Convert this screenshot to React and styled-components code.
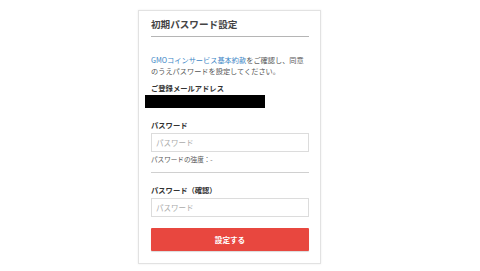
import React from "react";
import styled, { createGlobalStyle } from "styled-components";

const Global = createGlobalStyle`
  html, body { margin: 0; padding: 0; background: #fff; }
  body { font-family: "Noto Sans CJK JP", "Noto Sans", sans-serif; }
`;

const Page = styled.div`
  width: 480px;
  height: 271px;
  display: flex;
  justify-content: flex-start;
  padding: 10px 0 0 138px;
  box-sizing: border-box;
`;

const Card = styled.div`
  width: 183px;
  height: 254px;
  box-sizing: border-box;
  border: 1px solid #e2e2e2;
  box-shadow: 0 0 2px rgba(0,0,0,0.08);
  padding: 6px 11px 0 12px;
  display: flex;
  flex-direction: column;
`;

const Title = styled.div`
  font-size: 9.6px;
  font-weight: 700;
  color: #444;
  line-height: 14px;
  padding-bottom: 5px;
  border-bottom: 1px solid #b5b5b5;
`;

const Intro = styled.p`
  margin: 18px 0 0;
  font-size: 7.2px;
  line-height: 10.5px;
  color: #555;
`;

const Link = styled.span`
  color: #3d86c6;
`;

const Label = styled.div`
  font-size: 7.3px;
  font-weight: 700;
  color: #333;
  line-height: 10px;
  margin-top: ${(p) => p.$top}px;
`;

const Masked = styled.div`
  width: 120px;
  height: 13px;
  background: #000;
  margin: 2px 0 0 -6px;
`;

const Input = styled.input`
  display: block;
  box-sizing: border-box;
  width: 158px;
  height: 19px;
  margin-top: 3px;
  border: 1px solid #dcdcdc;
  padding: 0 4px;
  font-family: inherit;
  font-size: 7.5px;
  color: #333;
  outline: none;
  &::placeholder { color: #aaa; }
`;

const Hint = styled.div`
  font-size: 6.6px;
  color: #555;
  line-height: 10px;
  margin-top: 2px;
  padding-bottom: 8px;
  border-bottom: 1px solid #d0d0d0;
`;

const Button = styled.button`
  margin-top: 11px;
  width: 158px;
  height: 23px;
  border: none;
  border-radius: 1px;
  background: #e8473f;
  color: #fff;
  font-family: inherit;
  font-weight: 700;
  font-size: 7.6px;
  box-shadow: 0 1px 1px rgba(0,0,0,0.15);
`;

export default function App() {
  return (
    <>
      <Global />
      <Page>
        <Card>
          <Title>初期パスワード設定</Title>
          <Intro>
            <Link>GMOコインサービス基本約款</Link>をご確認し、同意のうえパスワードを設定してください。
          </Intro>
          <Label $top={7}>ご登録メールアドレス</Label>
          <Masked />
          <Label $top={12}>パスワード</Label>
          <Input placeholder="パスワード" />
          <Hint>パスワードの強度：-</Hint>
          <Label $top={12}>パスワード（確認）</Label>
          <Input placeholder="パスワード" />
          <Button>設定する</Button>
        </Card>
      </Page>
    </>
  );
}
